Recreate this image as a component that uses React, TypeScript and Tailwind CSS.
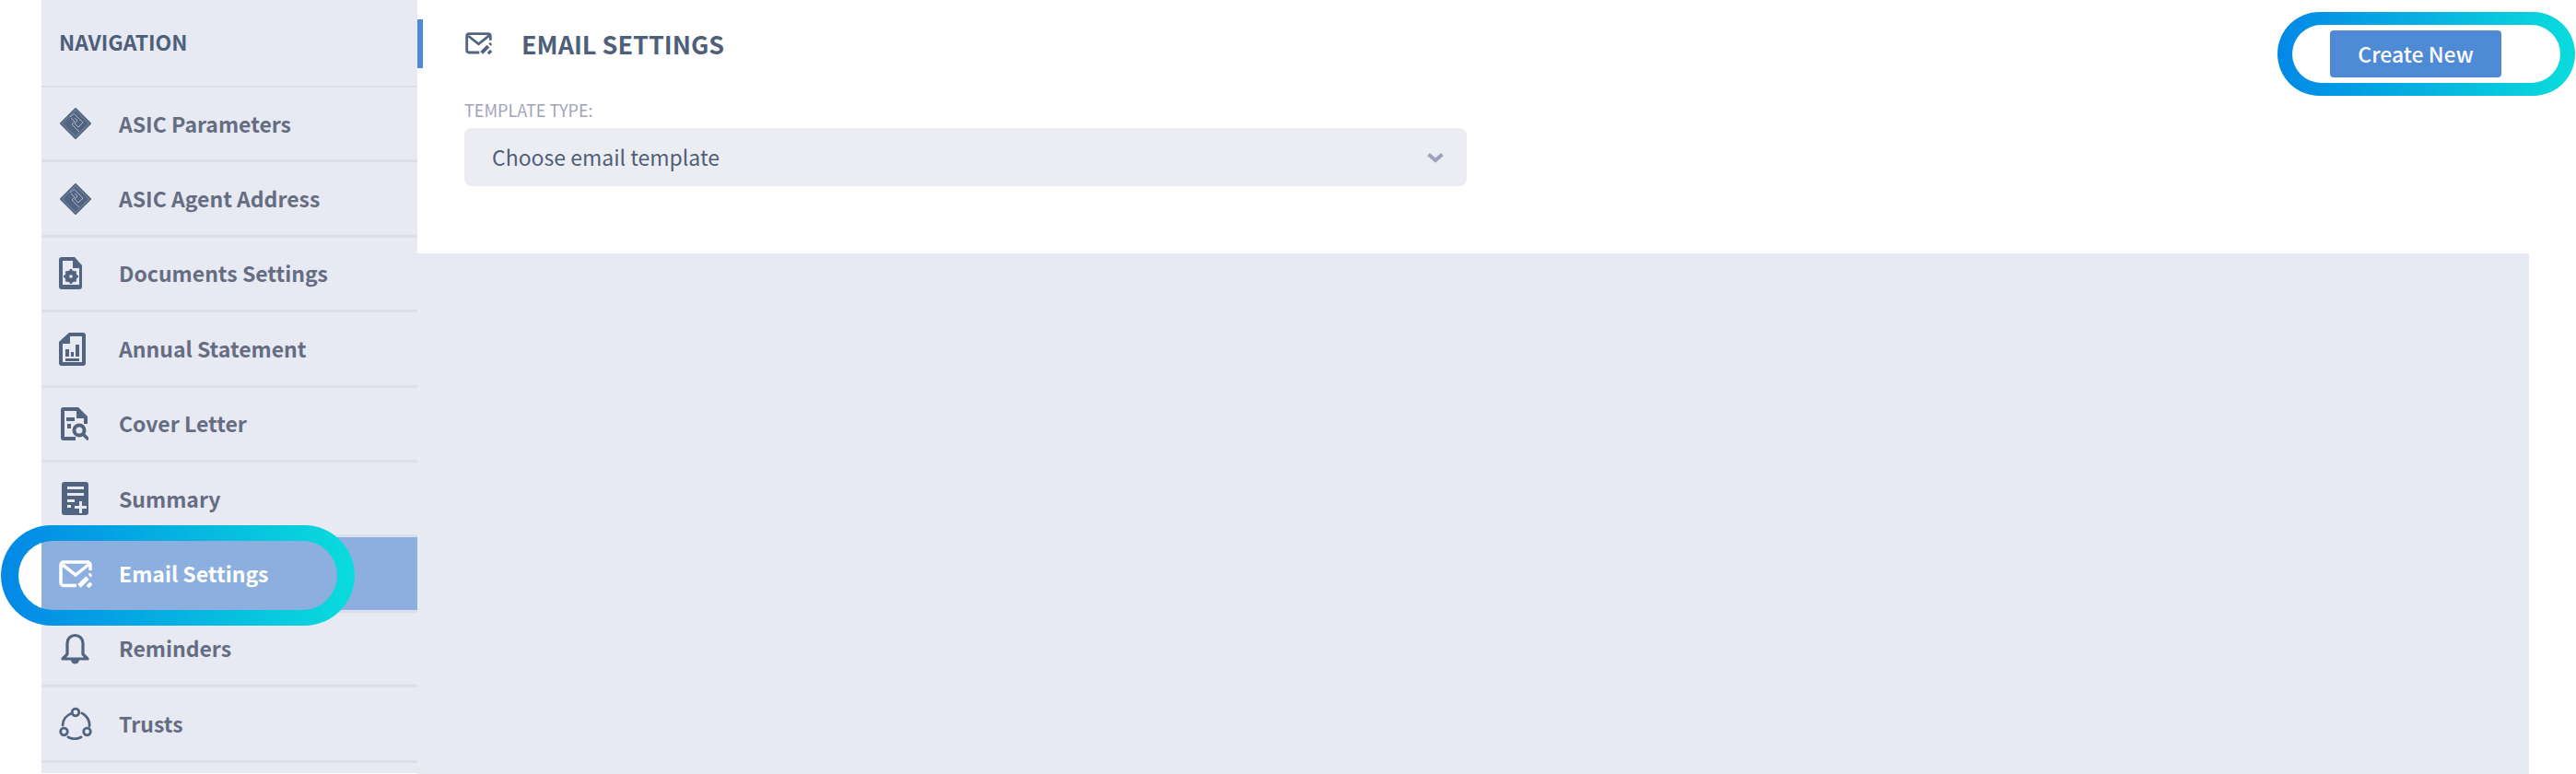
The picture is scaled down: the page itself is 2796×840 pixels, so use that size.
import type { ReactNode } from "react";

const slate = "#52647f";

function AsicIcon() {
  return (
    <svg viewBox="0 0 36 36" className="h-[36px] w-[36px]" aria-hidden>
      <path d="M18 2 34 18 18 34 2 18Z" fill={slate} stroke={slate} strokeWidth="2" strokeLinejoin="round" />
      <path d="M18 3.5 32.5 18 18 32.5 3.5 18Z" fill="none" stroke="#8fa0b8" strokeWidth="0.7" />
      <path d="M12 11 17 7M13 12l4 4-3 3 8 8M17 8l9 9-5 5-4-4 3-3-3-3" fill="none" stroke="#a7b4c8" strokeWidth="1" />
    </svg>
  );
}

function DocSettingsIcon() {
  return (
    <svg viewBox="0 0 26 37" className="h-[37px] w-[26px]" aria-hidden>
      <path d="M3 1h14l8 9v23a3 3 0 0 1-3 3H3a3 3 0 0 1-3-3V4a3 3 0 0 1 3-3Z" fill={slate} />
      <path d="M4 5h11v8h7v18H4Z" fill="#e7eaf3" />
      <circle cx="13" cy="22" r="5" fill="none" stroke={slate} strokeWidth="3.5" />
      <path d="M13 14v16M5 22h16M7.5 16.5l11 11M18.5 16.5l-11 11" stroke={slate} strokeWidth="2.4" />
      <circle cx="13" cy="22" r="1.8" fill="#e7eaf3" />
    </svg>
  );
}

function AnnualIcon() {
  return (
    <svg viewBox="0 0 29 37" className="h-[37px] w-[29px]" aria-hidden>
      <path d="M11 1h15a3 3 0 0 1 3 3v30a3 3 0 0 1-3 3H3a3 3 0 0 1-3-3V11Z" fill={slate} />
      <path d="M12 5h13v28H4V13h8Z" fill="#e7eaf3" />
      <path d="M7 19h4v8H7ZM13 22h3v5h-3ZM18 14h4v13h-4ZM7 29h15v3H7Z" fill={slate} />
    </svg>
  );
}

function CoverIcon() {
  return (
    <svg viewBox="0 0 30 36" className="h-[36px] w-[30px]" aria-hidden>
      <path d="M3 0h16l10 10v8h-4v-6h-8V4H4v28h12v4H3a3 3 0 0 1-3-3V3a3 3 0 0 1 3-3Z" fill={slate} />
      <path d="M6 11h9v4H6ZM7 18h4v5H7Z" fill={slate} />
      <circle cx="20" cy="25" r="5.5" fill="none" stroke={slate} strokeWidth="4" />
      <path d="m24 29 5 5" stroke={slate} strokeWidth="3.5" strokeLinecap="round" />
    </svg>
  );
}

function SummaryIcon() {
  return (
    <svg viewBox="0 0 29 36" className="h-[36px] w-[29px]" aria-hidden>
      <rect width="29" height="36" rx="3" fill={slate} />
      <path d="M6 5h18v3H6ZM6 12h18v3H6ZM6 19h8v3H6ZM6 25h4v3H6ZM19 21h3v5h5v3h-5v5h-3v-5h-5v-3h5Z" fill="#e7eaf3" />
    </svg>
  );
}

function MailEditIcon({ color, className }: { color: string; className: string }) {
  return (
    <svg viewBox="0 0 36 30" className={className} aria-hidden>
      <path d="M19 27.5H5A3 3 0 0 1 2 24.5V5A3 3 0 0 1 5 2H31A3 3 0 0 1 34 5V11" fill="none" stroke={color} strokeWidth="3.5" />
      <path d="M4 5 18 16 33 4" fill="none" stroke={color} strokeWidth="3.5" />
      <path d="M22 28 31 19" stroke={color} strokeWidth="5" />
      <path d="M33 17 35 15M31 29l4-4" stroke={color} strokeWidth="4" />
    </svg>
  );
}

function BellIcon() {
  return (
    <svg viewBox="0 0 31 37" className="h-[37px] w-[31px]" aria-hidden>
      <path d="M7 25V13a8.500 8.500 0 0 1 17 0v12l5 5H2Z" fill="none" stroke={slate} strokeWidth="3.2" strokeLinejoin="round" />
      <path d="M11 31h9a4.500 4.500 0 0 1-9 0Z" fill={slate} />
    </svg>
  );
}

function TrustsIcon() {
  return (
    <svg viewBox="0 0 36 36" className="h-[36px] w-[36px]" aria-hidden>
      <g fill="none" stroke={slate} strokeWidth="2.8">
        <circle cx="18" cy="6" r="3.8" />
        <circle cx="5.500" cy="27" r="3.800" />
        <circle cx="30.500" cy="27" r="3.800" />
        <path d="M13 7.500A14 14 0 0 0 4 20M25 7A14 14 0 0 1 33 21M10 33a15 15 0 0 0 14 0" strokeLinecap="round" />
      </g>
    </svg>
  );
}

type NavItem = { label: string; icon: ReactNode; active?: boolean };

const items: NavItem[] = [
  { label: "ASIC Parameters", icon: <AsicIcon /> },
  { label: "ASIC Agent Address", icon: <AsicIcon /> },
  { label: "Documents Settings", icon: <DocSettingsIcon /> },
  { label: "Annual Statement", icon: <AnnualIcon /> },
  { label: "Cover Letter", icon: <span className="ml-[2px] flex"><CoverIcon /></span> },
  { label: "Summary", icon: <span className="ml-[3px] flex"><SummaryIcon /></span> },
  { label: "Email Settings", icon: <MailEditIcon color="#ffffff" className="h-[30px] w-[36px]" />, active: true },
  { label: "Reminders", icon: <span className="ml-[2px] flex"><BellIcon /></span> },
  { label: "Trusts", icon: <TrustsIcon /> },
];

// highlight ring drawn over the screenshot, even-odd so the middle stays see-through
function Ring({ id, w, h, inset, className }: { id: string; w: number; h: number; inset: [number, number]; className: string }) {
  const [ix, iy] = inset;
  const r = h / 2;
  const ir = r - iy;
  const outer = `M${r} 0H${w - r}A${r} ${r} 0 0 1 ${w - r} ${h}H${r}A${r} ${r} 0 0 1 ${r} 0Z`;
  const inner = `M${ix + ir} ${iy}H${w - ix - ir}A${ir} ${ir} 0 0 1 ${w - ix - ir} ${h - iy}H${ix + ir}A${ir} ${ir} 0 0 1 ${ix + ir} ${iy}Z`;
  return (
    <svg width={w} height={h} viewBox={`0 0 ${w} ${h}`} className={className} aria-hidden>
      <defs>
        <linearGradient id={id} x1="0" x2="1" y1="0" y2="0">
          <stop offset="0" stopColor="#0288e6" />
          <stop offset="1" stopColor="#0adcdc" />
        </linearGradient>
      </defs>
      <path d={outer + inner} fillRule="evenodd" fill={`url(#${id})`} />
    </svg>
  );
}

export default function App() {
  return (
    <div className="relative flex h-[840px] overflow-hidden bg-white font-['Noto_Sans_CJK_SC','Source_Sans_Pro',sans-serif]">
      <aside className="ml-[45px] h-[839px] w-[408px] shrink-0 bg-[#e7eaf3]">
        <div className="flex h-[95px] items-center border-b-2 border-[#dcdfe9] pb-[2px] pl-[19px] text-[23px] leading-none font-bold text-[#4e6079]">
          NAVIGATION
        </div>
        <nav>
          {items.map((item) => (
            <div key={item.label} className="h-[81.4px] border-b-[3px] border-[#dcdfe9]">
              <div
                className={
                  item.active
                    ? "flex h-full items-center bg-[#8cafe0] pl-[19px] text-[23px] leading-none font-bold text-white"
                    : "flex h-full items-center pl-[19px] text-[23px] leading-none font-bold text-[#666d82]"
                }
              >
                <span className="flex w-[65px] shrink-0 items-center">{item.icon}</span>
                {item.label}
              </div>
            </div>
          ))}
        </nav>
      </aside>

      <main className="flex min-w-0 flex-1 flex-col">
        <section className="relative h-[275px] shrink-0 rounded-bl-[4px] bg-white pt-[35px] pl-[51px]">
          <span className="absolute top-[21px] left-0 h-[53px] w-[6px] bg-[#4f8ad6]" />
          <div className="flex h-[24px] items-center">
            <MailEditIcon color="#52647f" className="h-[24px] w-[31px]" />
            <h1 className="ml-[31px] text-[27px] leading-none font-bold text-[#4e6079]">EMAIL SETTINGS</h1>
          </div>
          <label className="mt-[49px] block text-[18px] leading-[22px] text-[#9fa4bb]">TEMPLATE TYPE:</label>
          <div className="mt-[9px] flex h-[63px] w-[1088px] items-center justify-between rounded-[8px] bg-[#ecedf3] pr-[24px] pl-[30px] text-[23px] text-[#4f5f78]">
            <span>Choose email template</span>
            <svg viewBox="0 0 20 12" className="h-[12px] w-[20px]" aria-hidden>
              <path d="M2.500 2.500 10 9l7.500-6.500" fill="none" stroke="#9ca3bd" strokeWidth="4" />
            </svg>
          </div>
          <button
            type="button"
            className="absolute top-[33px] right-[81px] h-[51px] w-[186px] rounded-[4px] bg-[#4f8ad6] text-[23px] leading-none font-medium text-white"
          >
            Create New
          </button>
        </section>
        <div className="mr-[51px] flex-1 bg-[#e7eaf3]" />
      </main>

      <Ring id="ring-nav" w={384} h={109} inset={[19, 17]} className="absolute top-[570px] left-[1px]" />
      <Ring id="ring-btn" w={323} h={91} inset={[16, 14]} className="absolute top-[13px] left-[2472px]" />
    </div>
  );
}
